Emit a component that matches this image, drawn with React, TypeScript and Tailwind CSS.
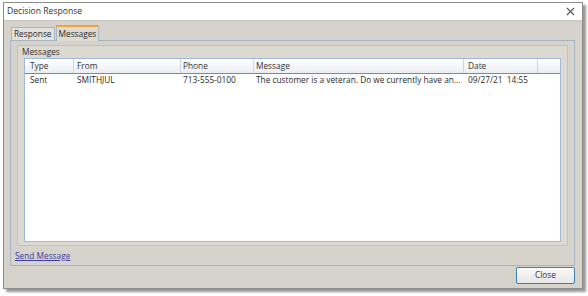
import React from 'react';

const font = { fontFamily: '"Open Sans", "Noto Sans", sans-serif' };

const columns = [
  { label: 'Type', w: 'w-[49px]', pl: 'pl-[5px]' },
  { label: 'From', w: 'w-[107px]', pl: 'pl-[3px]' },
  { label: 'Phone', w: 'w-[73px]', pl: 'pl-[2px]' },
  { label: 'Message', w: 'w-[210px]', pl: 'pl-[2px]' },
  { label: 'Date', w: 'w-[74px]', pl: 'pl-[4px]' },
];

const rows = [
  ['Sent', 'SMITHJUL', '713-555-0100', 'The customer is a veteran. Do we currently have an...', '09/27/21  14:55'],
];

export default function App() {
  return (
    <div className="w-[588px] h-[296px] bg-white pt-[2px] pl-[3px] text-[8.3px] text-[#2a2a2a]" style={font}>
      <div className="w-[580px] h-[287px] flex flex-col border border-[#8c8c8c] shadow-[3px_3px_2px_rgba(0,0,0,0.4)]">
        {/* title bar */}
        <div className="h-[17px] bg-white flex items-center justify-between pl-[3px] pr-[7px] text-[#333] text-[8.6px]">
          <span>Decision Response</span>
          <svg width="9" height="9" viewBox="0 0 9 9">
            <path d="M1 1L8 8M8 1L1 8" stroke="#555" strokeWidth="1.1" />
          </svg>
        </div>

        {/* body */}
        <div className="flex-1 flex flex-col bg-[#d6d3cc] border-t border-[#c8c5bf] pt-[3px] px-[6px]">
          {/* tabs */}
          <div className="flex items-end pl-[1px] h-[16px]">
            <div className="h-[13px] px-[2px] flex items-center border border-b-0 border-[#a9b6c2] bg-[#e3e1dc]">Response</div>
            <div className="h-[16px] ml-[1px] px-[2px] flex items-center border border-b-0 border-[#a9b6c2] border-t-2 border-t-[#f2a33a] bg-[#dedbd5] -mb-px relative">Messages</div>
          </div>

          {/* tab panel */}
          <div className="w-[565px] h-[226px] border border-[#a6b5c3] flex flex-col px-[6px] pt-[4px]">
            <div className="w-[551px] h-[201px] border border-[#c4c1ba] bg-[#dcd9d3] flex flex-col px-[6px]">
              <div className="h-[12px] flex items-center text-[#333] -ml-[2px]">Messages</div>
              <div className="w-[537px] h-[184px] border border-[#9fbad6] bg-white flex flex-col">
                <div className="flex h-[15px] bg-gradient-to-b from-white to-[#eaeef3] border-b border-[#7f8a96]">
                  {columns.map((c) => (
                    <div key={c.label} className={`${c.w} ${c.pl} flex items-center border-r border-[#d2d6db] text-[#333]`}>
                      {c.label}
                    </div>
                  ))}
                  <div className="flex-1" />
                </div>
                {rows.map((r, i) => (
                  <div key={i} className="flex h-[13px]">
                    {r.map((cell, j) => (
                      <div key={j} className={`${columns[j].w} ${columns[j].pl} flex items-center whitespace-pre overflow-hidden`}>
                        {cell}
                      </div>
                    ))}
                  </div>
                ))}
              </div>
            </div>
            <div className="mt-[4px] h-[12px] flex items-center">
              <span className="text-[#3b3ba3] underline -ml-[2px]">Send Message</span>
            </div>
          </div>

          {/* footer */}
          <div className="flex justify-end pr-[1px] pt-[1px]">
            <button className="w-[59px] h-[17px] border border-[#3c7fb1] rounded-[2px] bg-gradient-to-b from-[#fafafa] to-[#e6e6e6] text-[#333] flex items-center justify-center">
              Close
            </button>
          </div>
        </div>
      </div>
    </div>
  );
}
